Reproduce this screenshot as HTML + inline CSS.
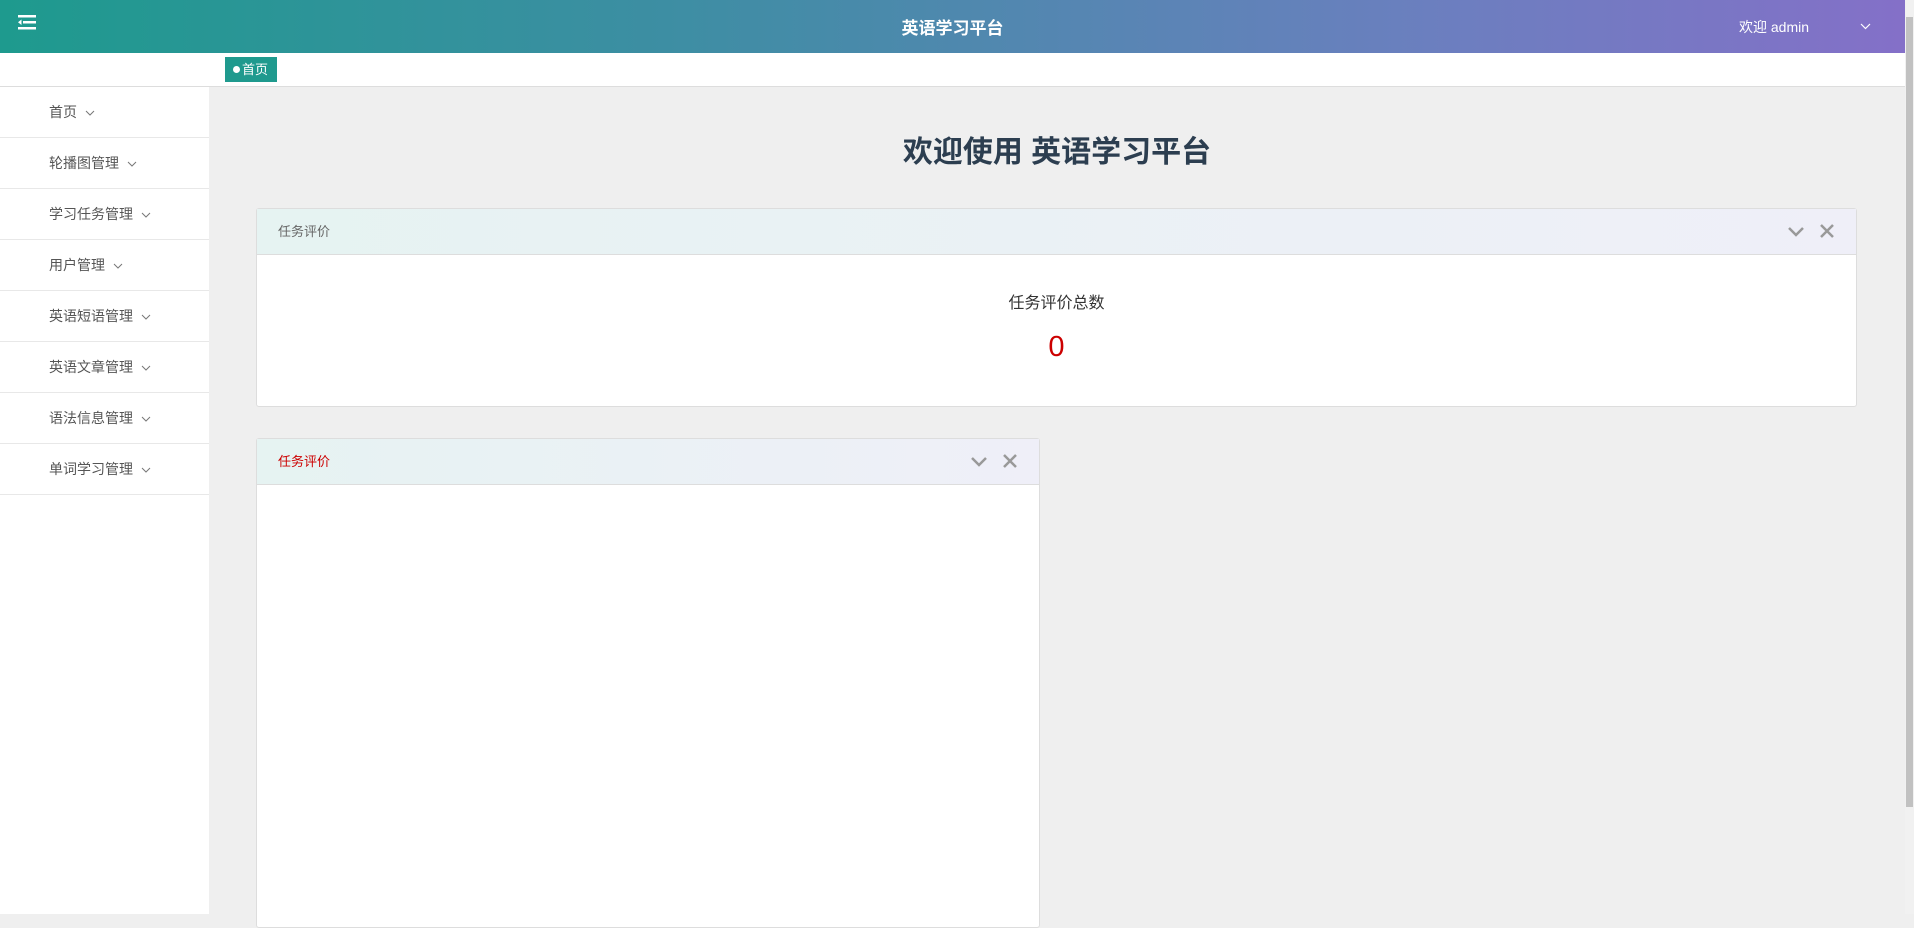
<!DOCTYPE html>
<html><head><meta charset="utf-8"><style>
*{margin:0;padding:0;box-sizing:border-box}
body{width:1914px;height:914px;overflow:hidden;background:#efefef;font-family:"Liberation Sans","Noto Sans CJK SC",sans-serif;position:relative}
.hd{position:absolute;left:0;top:0;width:1905px;height:53px;background:linear-gradient(90deg,#1e9a8e,#3d8ea3 35%,#6b7fbf 75%,#8470c8)}
.menu{position:absolute;left:18px;top:15px}
.title{position:absolute;left:0;width:1905px;top:14px;text-align:center;color:#fff;font-weight:bold;font-size:17px}
.user{position:absolute;left:1739px;top:17px;color:#fff;font-size:14px}
.tabs{position:absolute;left:0;top:53px;width:1905px;height:34px;background:#fff;border-bottom:1px solid #ddd}
.tab{position:absolute;left:225px;top:4px;width:52px;height:25px;background:#1f9a8e;color:#fff;font-size:13px;line-height:25px;padding-left:8px}
.tab i{display:inline-block;width:7px;height:7px;border-radius:50%;background:#fff;margin-right:2px;vertical-align:1px}
.side{position:absolute;left:0;top:87px;width:209px;height:827px;background:#fff}
.it{height:51px;border-bottom:1px solid #e8e8e8;padding-left:49px;line-height:51px;font-size:14px;color:#555}
.it svg{margin-left:8px;vertical-align:1px}
.h1{position:absolute;left:209px;width:1696px;top:127px;text-align:center;font-size:30px;font-weight:bold;color:#2c3e50}
.panel{position:absolute;background:#fff;border:1px solid #ddd;border-radius:3px}
.ph{height:46px;background:linear-gradient(90deg,#e6f3f2,#efeff8);border-bottom:1px solid #ddd;font-size:13px;color:#666;line-height:46px;padding-left:21px;position:relative}
.ic{position:absolute;top:17px}
.sb{position:absolute;left:1905px;top:0;width:9px;height:914px;background:#f1f1f1}
.sb div{position:absolute;left:1px;top:17px;width:7px;height:790px;background:#c1c1c1}
</style></head><body>
<div class="hd">
<svg class="menu" width="18" height="15" viewBox="0 0 18 15"><rect x="0" y="0" width="18" height="2.5" fill="#fff"/><rect x="5" y="6" width="13" height="2.5" fill="#fff"/><rect x="0" y="12" width="18" height="2.5" fill="#fff"/><path d="M0 7.2 L3.5 4.5 V10 Z" fill="#fff"/></svg>
<div class="title">英语学习平台</div>
<div class="user">欢迎 admin</div>
<svg style="position:absolute;left:1860px;top:23px" width="11" height="7"><path d="M1 1 L5.5 5.5 L10 1" stroke="#fff" fill="none" stroke-width="1.2"/></svg>
</div>
<div class="tabs"><div class="tab"><i></i>首页</div></div>
<div class="side">
<div class="it">首页<svg width="10" height="6"><path d="M1 1L5 5L9 1" stroke="#777" fill="none"/></svg></div>
<div class="it">轮播图管理<svg width="10" height="6"><path d="M1 1L5 5L9 1" stroke="#777" fill="none"/></svg></div>
<div class="it">学习任务管理<svg width="10" height="6"><path d="M1 1L5 5L9 1" stroke="#777" fill="none"/></svg></div>
<div class="it">用户管理<svg width="10" height="6"><path d="M1 1L5 5L9 1" stroke="#777" fill="none"/></svg></div>
<div class="it">英语短语管理<svg width="10" height="6"><path d="M1 1L5 5L9 1" stroke="#777" fill="none"/></svg></div>
<div class="it">英语文章管理<svg width="10" height="6"><path d="M1 1L5 5L9 1" stroke="#777" fill="none"/></svg></div>
<div class="it">语法信息管理<svg width="10" height="6"><path d="M1 1L5 5L9 1" stroke="#777" fill="none"/></svg></div>
<div class="it">单词学习管理<svg width="10" height="6"><path d="M1 1L5 5L9 1" stroke="#777" fill="none"/></svg></div>
</div>
<div class="h1">欢迎使用 英语学习平台</div>
<div class="panel" style="left:256px;top:208px;width:1601px;height:199px">
<div class="ph">任务评价
<svg class="ic" style="right:51px" width="18" height="12"><path d="M2 2L9 9L16 2" stroke="#999" fill="none" stroke-width="2.5"/></svg>
<svg class="ic" style="right:22px;top:15px" width="14" height="14"><path d="M1 1L13 13M13 1L1 13" stroke="#999" stroke-width="2.5"/></svg></div>
<div style="text-align:center;font-size:16px;color:#333;margin-top:34px">任务评价总数</div>
<div style="text-align:center;font-size:29px;color:#c00;margin-top:18px">0</div>
</div>
<div class="panel" style="left:256px;top:438px;width:784px;height:490px">
<div class="ph" style="color:#c00">任务评价
<svg class="ic" style="right:51px" width="18" height="12"><path d="M2 2L9 9L16 2" stroke="#999" fill="none" stroke-width="2.5"/></svg>
<svg class="ic" style="right:22px;top:15px" width="14" height="14"><path d="M1 1L13 13M13 1L1 13" stroke="#999" stroke-width="2.5"/></svg></div>
</div>
<div class="sb"><div></div></div>
</body></html>
